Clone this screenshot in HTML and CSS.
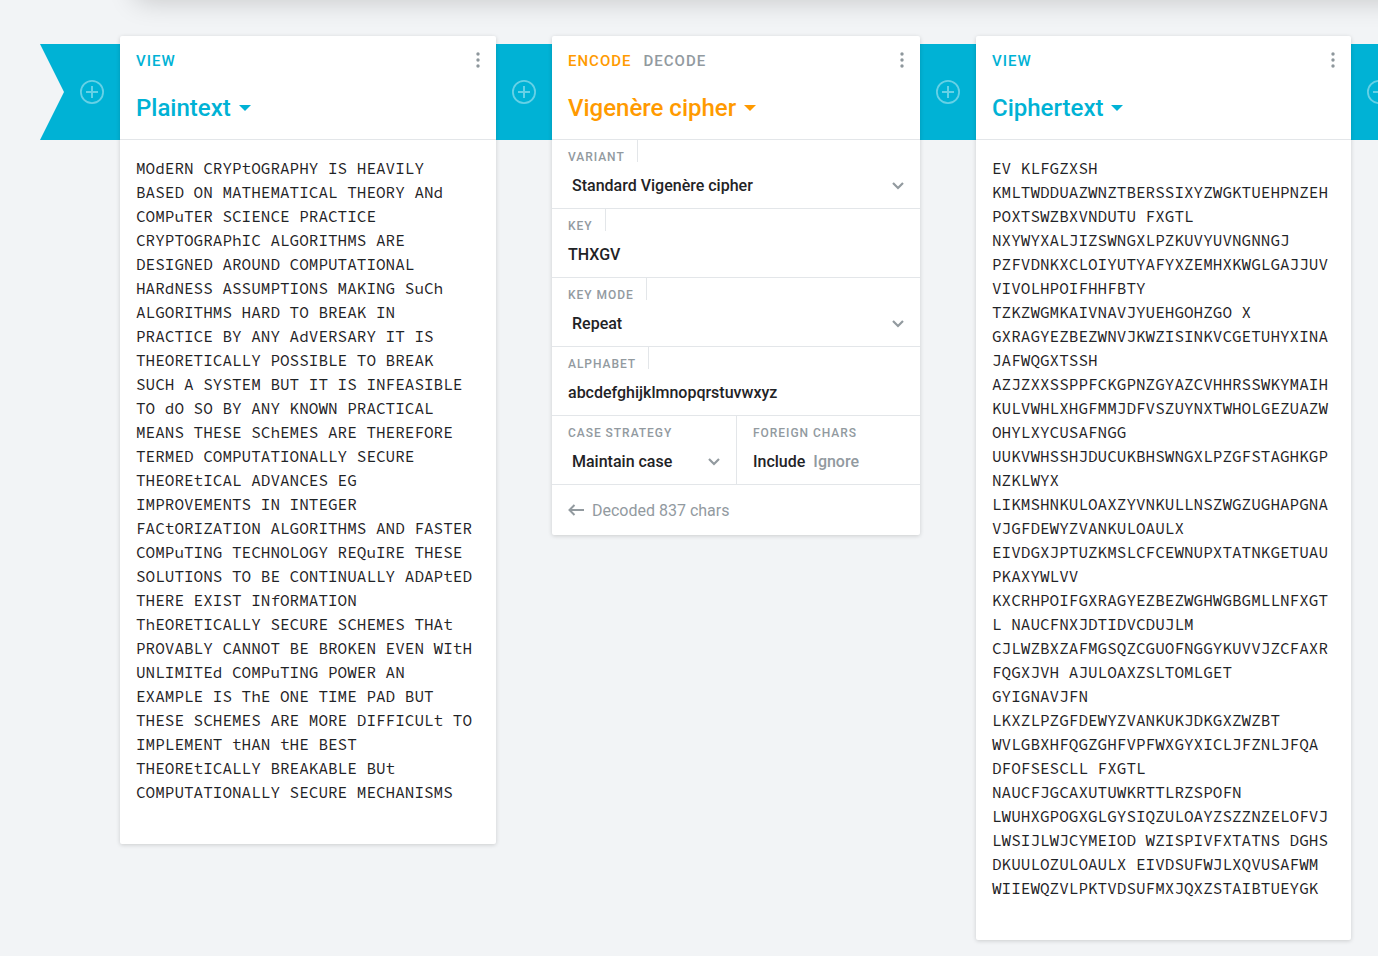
FILE: index.html
```html
<!DOCTYPE html>
<html lang="en">
<head>
<meta charset="utf-8">
<title>Vigenère cipher</title>
<link rel="stylesheet" href="styles.css">
</head>
<body>
<svg class="defs" width="0" height="0">
  <symbol id="plus" viewBox="0 0 24 24"><circle cx="12" cy="12" r="11.1" fill="none" stroke="currentColor" stroke-width="1.8"/><path d="M12 6v12M6 12h12" stroke="currentColor" stroke-width="2"/></symbol>
  <symbol id="dots" viewBox="0 0 4 16"><circle cx="2" cy="2" r="1.7"/><circle cx="2" cy="8" r="1.7"/><circle cx="2" cy="14" r="1.7"/></symbol>
  <symbol id="caret" viewBox="0 0 12 6"><path d="M0 0h12L6 6z"/></symbol>
  <symbol id="chevron" viewBox="0 0 12 8"><path d="M1 1l5 5 5-5" fill="none" stroke="currentColor" stroke-width="2.2"/></symbol>
  <symbol id="arrow" viewBox="0 0 16 12"><path d="M16 6H1.5M6.5 1l-5 5 5 5" fill="none" stroke="currentColor" stroke-width="2"/></symbol>
</svg>
<div class="top-panel"></div>
<main class="pipeline">
  <div class="pipe pipe-start"><svg class="plus"><use href="#plus"/></svg></div>
  <section class="brick">
    <header class="brick-header">
      <div class="actions"><span class="action">VIEW</span><svg class="dots"><use href="#dots"/></svg></div>
      <h2 class="title">Plaintext<svg class="caret"><use href="#caret"/></svg></h2>
    </header>
    <pre class="text">MOdERN CRYPtOGRAPHY IS HEAVILY
BASED ON MATHEMATICAL THEORY ANd
COMPuTER SCIENCE PRACTICE
CRYPTOGRAPhIC ALGORITHMS ARE
DESIGNED AROUND COMPUTATIONAL
HARdNESS ASSUMPTIONS MAKING SuCh
ALGORITHMS HARD TO BREAK IN
PRACTICE BY ANY AdVERSARY IT IS
THEORETICALLY POSSIBLE TO BREAK
SUCH A SYSTEM BUT IT IS INFEASIBLE
TO dO SO BY ANY KNOWN PRACTICAL
MEANS THESE SChEMES ARE THEREFORE
TERMED COMPUTATIONALLY SECURE
THEOREtICAL ADVANCES EG
IMPROVEMENTS IN INTEGER
FACtORIZATION ALGORITHMS AND FASTER
COMPuTING TECHNOLOGY REQuIRE THESE
SOLUTIONS TO BE CONTINUALLY ADAPtED
THERE EXIST INfORMATION
ThEORETICALLY SECURE SCHEMES THAt
PROVABLY CANNOT BE BROKEN EVEN WItH
UNLIMITEd COMPuTING POWER AN
EXAMPLE IS ThE ONE TIME PAD BUT
THESE SCHEMES ARE MORE DIFFICULt TO
IMPLEMENT tHAN tHE BEST
THEOREtICALLY BREAKABLE BUt
COMPUTATIONALLY SECURE MECHANISMS</pre>
  </section>
  <div class="pipe"><svg class="plus"><use href="#plus"/></svg></div>
  <section class="brick brick-encoder">
    <header class="brick-header">
      <div class="actions"><span class="action">ENCODE</span><span class="action muted">DECODE</span><svg class="dots"><use href="#dots"/></svg></div>
      <h2 class="title">Vigenère cipher<svg class="caret"><use href="#caret"/></svg></h2>
    </header>
    <div class="field"><span class="label tick">VARIANT</span><div class="value select">Standard Vigenère cipher<svg class="chevron"><use href="#chevron"/></svg></div></div>
    <div class="field"><span class="label tick">KEY</span><div class="value">THXGV</div></div>
    <div class="field"><span class="label tick">KEY MODE</span><div class="value select">Repeat<svg class="chevron"><use href="#chevron"/></svg></div></div>
    <div class="field"><span class="label tick">ALPHABET</span><div class="value">abcdefghijklmnopqrstuvwxyz</div></div>
    <div class="field-row">
      <div class="field"><span class="label">CASE STRATEGY</span><div class="value select">Maintain case<svg class="chevron"><use href="#chevron"/></svg></div></div>
      <div class="field"><span class="label">FOREIGN CHARS</span><div class="value options"><span>Include</span><span class="muted">Ignore</span></div></div>
    </div>
    <footer class="status"><svg class="arrow"><use href="#arrow"/></svg>Decoded 837 chars</footer>
  </section>
  <div class="pipe"><svg class="plus"><use href="#plus"/></svg></div>
  <section class="brick brick-result">
    <header class="brick-header">
      <div class="actions"><span class="action">VIEW</span><svg class="dots"><use href="#dots"/></svg></div>
      <h2 class="title">Ciphertext<svg class="caret"><use href="#caret"/></svg></h2>
    </header>
    <pre class="text">EV KLFGZXSH
KMLTWDDUAZWNZTBERSSIXYZWGKTUEHPNZEH
POXTSWZBXVNDUTU FXGTL
NXYWYXALJIZSWNGXLPZKUVYUVNGNNGJ
PZFVDNKXCLOIYUTYAFYXZEMHXKWGLGAJJUV
VIVOLHPOIFHHFBTY
TZKZWGMKAIVNAVJYUEHGOHZGO X
GXRAGYEZBEZWNVJKWZISINKVCGETUHYXINA
JAFWQGXTSSH
AZJZXXSSPPFCKGPNZGYAZCVHHRSSWKYMAIH
KULVWHLXHGFMMJDFVSZUYNXTWHOLGEZUAZW
OHYLXYCUSAFNGG
UUKVWHSSHJDUCUKBHSWNGXLPZGFSTAGHKGP
NZKLWYX
LIKMSHNKULOAXZYVNKULLNSZWGZUGHAPGNA
VJGFDEWYZVANKULOAULX
EIVDGXJPTUZKMSLCFCEWNUPXTATNKGETUAU
PKAXYWLVV
KXCRHPOIFGXRAGYEZBEZWGHWGBGMLLNFXGT
L NAUCFNXJDTIDVCDUJLM
CJLWZBXZAFMGSQZCGUOFNGGYKUVVJZCFAXR
FQGXJVH AJULOAXZSLTOMLGET
GYIGNAVJFN
LKXZLPZGFDEWYZVANKUKJDKGXZWZBT
WVLGBXHFQGZGHFVPFWXGYXICLJFZNLJFQA
DFOFSESCLL FXGTL
NAUCFJGCAXUTUWKRTTLRZSPOFN
LWUHXGPOGXGLGYSIQZULOAYZSZZNZELOFVJ
LWSIJLWJCYMEIOD WZISPIVFXTATNS DGHS
DKUULOZULOAULX EIVDSUFWJLXQVUSAFWM
WIIEWQZVLPKTVDSUFMXJQXZSTAIBTUEYGK</pre>
  </section>
  <div class="pipe"><svg class="plus"><use href="#plus"/></svg></div>
</main>
</body>
</html>
```

FILE: styles.css
```css
* { box-sizing: border-box; }
body {
  margin: 0;
  height: 956px;
  overflow: hidden;
  position: relative;
  background: #f2f4f6;
  color: #1f2326;
  font-family: Roboto, sans-serif;
}
svg { display: block; flex: none; fill: currentColor; }
.defs { position: absolute; }
/* Panel above the pipeline; only its shadow reaches the page */
.top-panel {
  position: absolute;
  left: 136px;
  right: -100px;
  top: -60px;
  height: 60px;
  box-shadow: 0 0 28px rgba(0, 0, 0, .2);
}
.pipeline { display: flex; align-items: flex-start; padding: 36px 0 0 40px; }
.pipe {
  flex: none;
  width: 56px;
  height: 96px;
  margin-top: 8px;
  display: flex;
  align-items: center;
  justify-content: center;
  background: #00b2d5;
  color: rgba(255, 255, 255, .4);
}
.pipe-start {
  width: 80px;
  padding-left: 24px;
  clip-path: polygon(0 0, 100% 0, 100% 100%, 0 100%, 24px 50%);
}
.plus { width: 24px; height: 24px; }
.brick {
  flex: none;
  width: 376px;
  position: relative;
  background: #fff;
  border-radius: 2px;
  box-shadow: 0 1px 4px rgba(0, 0, 0, .16);
}
.brick-encoder { width: 368px; }
.brick-result { width: 375px; }
.brick-header {
  height: 104px;
  padding: 16px 16px 0;
  border-bottom: 1px solid #e3e6e9;
  color: #00b2d5;
}
.brick-encoder .brick-header { color: #ff9a00; }
.actions { display: flex; gap: 12px; height: 18px; line-height: 18px; font-size: 15px; font-weight: 500; letter-spacing: 1px; }
.muted { color: #929a9f; }
.dots { width: 4px; height: 16px; margin-left: auto; color: #8e979c; }
.title { display: flex; align-items: center; gap: 8px; margin: 22px 0 0; line-height: 32px; font-size: 24px; font-weight: 500; }
.caret { width: 12px; height: 6px; }
.text {
  margin: 0;
  padding: 16px 16px 40px;
  font: 16px/24px "Source Code Pro", "Liberation Mono", monospace;
}
.field { position: relative; height: 69px; padding: 0 16px; border-bottom: 1px solid #e3e6e9; }
.label {
  display: block;
  width: max-content;
  height: 22px;
  padding: 9px 12px 0 0;
  line-height: 16px;
  font-size: 12px;
  font-weight: 500;
  letter-spacing: .96px;
  color: #929a9f;
}
.tick { border-right: 1px solid #e3e6e9; }
.value { display: flex; align-items: center; height: 24px; margin-top: 11px; font-size: 16px; font-weight: 500; }
.select { padding-left: 4px; }
.chevron { width: 12px; height: 8px; margin: 2px 0 0 auto; color: #929a9f; }
.options { gap: 8px; }
.field-row { display: grid; grid-template-columns: 185px 1fr; }
.field-row .field:first-child { border-right: 1px solid #e3e6e9; }
.status { display: flex; align-items: center; gap: 8px; height: 50px; padding: 0 16px; font-size: 16px; color: #929a9f; }
.arrow { width: 16px; height: 12px; }
```
